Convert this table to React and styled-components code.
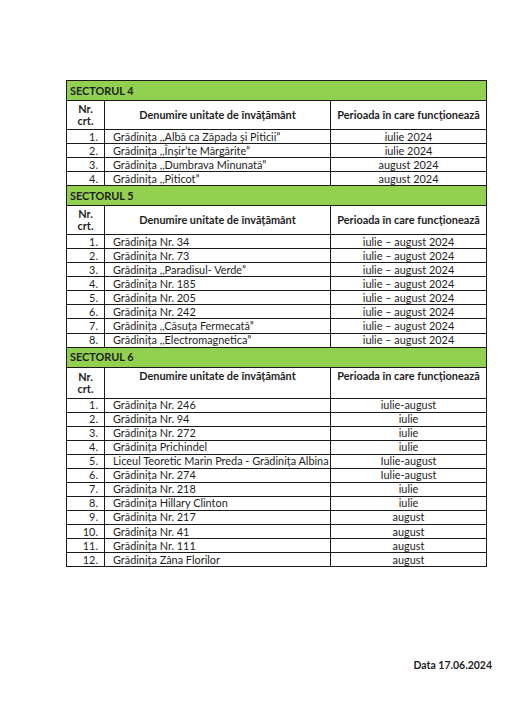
import React from 'react'
import styled, { createGlobalStyle } from 'styled-components'

const Global = createGlobalStyle`
    body {
        margin: 0;
        background: #ffffff;
        font-family: Lato, "Open Sans", sans-serif;
        color: #1e1e1e;
    }
`;

const Page = styled.div`
    width: 526px;
    height: 715px;
    padding: 80px 0 0 66px;
    box-sizing: border-box;
`;

const Table = styled.table`
    border-collapse: collapse;
    table-layout: fixed;
    width: 420px;
    font-size: 10.9px;
    line-height: 12px;

    td, th {
        border: 1px solid #1a1a1a;
        padding: 0;
    }
`;

const SectorCell = styled.td`
    background: #92d050;
    font-weight: bold;
    height: 19px;
    padding-left: 3px !important;
    text-align: left;
`;

const HeadCell = styled.th`
    height: 28px;
    font-weight: bold;
    text-align: center;
    vertical-align: ${props => (props.$top ? 'top' : 'middle')};
    padding-top: ${props => (props.$top ? '2px' : '0')} !important;
`;

const NrCell = styled.td`
    height: 13.05px;
    text-align: right;
    padding-right: 6px !important;
`;

const NameCell = styled.td`
    text-align: left;
    padding-left: 8px !important;
    white-space: nowrap;
`;

const PeriodCell = styled.td`
    text-align: center;
`;

const Footer = styled.div`
    width: 426px;
    margin-top: 92px;
    text-align: right;
    font-size: 10.5px;
    font-weight: bold;
`;

const sectors = [
    {
        name: 'SECTORUL 4',
        top: false,
        rows: [
            ['Grădinița ,,Albă ca Zăpada și Piticii”', 'iulie 2024'],
            ['Grădinița ,,Înșir’te Mărgărite”', 'iulie 2024'],
            ['Grădinița ,,Dumbrava Minunată”', 'august 2024'],
            ['Grădinița ,,Piticot”', 'august 2024'],
        ],
    },
    {
        name: 'SECTORUL 5',
        top: false,
        rows: [
            ['Grădinița Nr. 34', 'iulie – august 2024'],
            ['Grădinița Nr. 73', 'iulie – august 2024'],
            ['Grădinița ,,Paradisul- Verde”', 'iulie – august 2024'],
            ['Grădinița Nr. 185', 'iulie – august 2024'],
            ['Grădinița Nr. 205', 'iulie – august 2024'],
            ['Grădinița Nr. 242', 'iulie – august 2024'],
            ['Grădinița ,,Căsuța Fermecată”', 'iulie – august 2024'],
            ['Grădinița ,,Electromagnetica”', 'iulie – august 2024'],
        ],
    },
    {
        name: 'SECTORUL 6',
        top: true,
        rows: [
            ['Grădinița Nr. 246', 'iulie-august'],
            ['Grădinița Nr. 94', 'iulie'],
            ['Grădinița Nr. 272', 'iulie'],
            ['Grădinița Prichindel', 'iulie'],
            ['Liceul Teoretic Marin Preda - Grădinița Albina', 'Iulie-august'],
            ['Grădinița Nr. 274', 'Iulie-august'],
            ['Grădinița Nr. 218', 'iulie'],
            ['Grădinița Hillary Clinton', 'iulie'],
            ['Grădinița Nr. 217', 'august'],
            ['Grădinița Nr. 41', 'august'],
            ['Grădinița Nr. 111', 'august'],
            ['Grădinița Zâna Florilor', 'august'],
        ],
    },
]

function App() {
    return (
        <>
            <Global />
            <Page>
                <Table>
                    <colgroup>
                        <col style={{ width: 38 }} />
                        <col style={{ width: 226 }} />
                        <col style={{ width: 156 }} />
                    </colgroup>
                    <tbody>
                        {sectors.map(sector => (
                            <React.Fragment key={sector.name}>
                                <tr>
                                    <SectorCell colSpan={3}>{sector.name}</SectorCell>
                                </tr>
                                <tr>
                                    <HeadCell>Nr.<br />crt.</HeadCell>
                                    <HeadCell $top={sector.top}>Denumire unitate de învățământ</HeadCell>
                                    <HeadCell $top={sector.top}>Perioada în care funcționează</HeadCell>
                                </tr>
                                {sector.rows.map((row, i) => (
                                    <tr key={i}>
                                        <NrCell>{i + 1}.</NrCell>
                                        <NameCell>{row[0]}</NameCell>
                                        <PeriodCell>{row[1]}</PeriodCell>
                                    </tr>
                                ))}
                            </React.Fragment>
                        ))}
                    </tbody>
                </Table>
                <Footer>Data 17.06.2024</Footer>
            </Page>
        </>
    )
}

export default App
